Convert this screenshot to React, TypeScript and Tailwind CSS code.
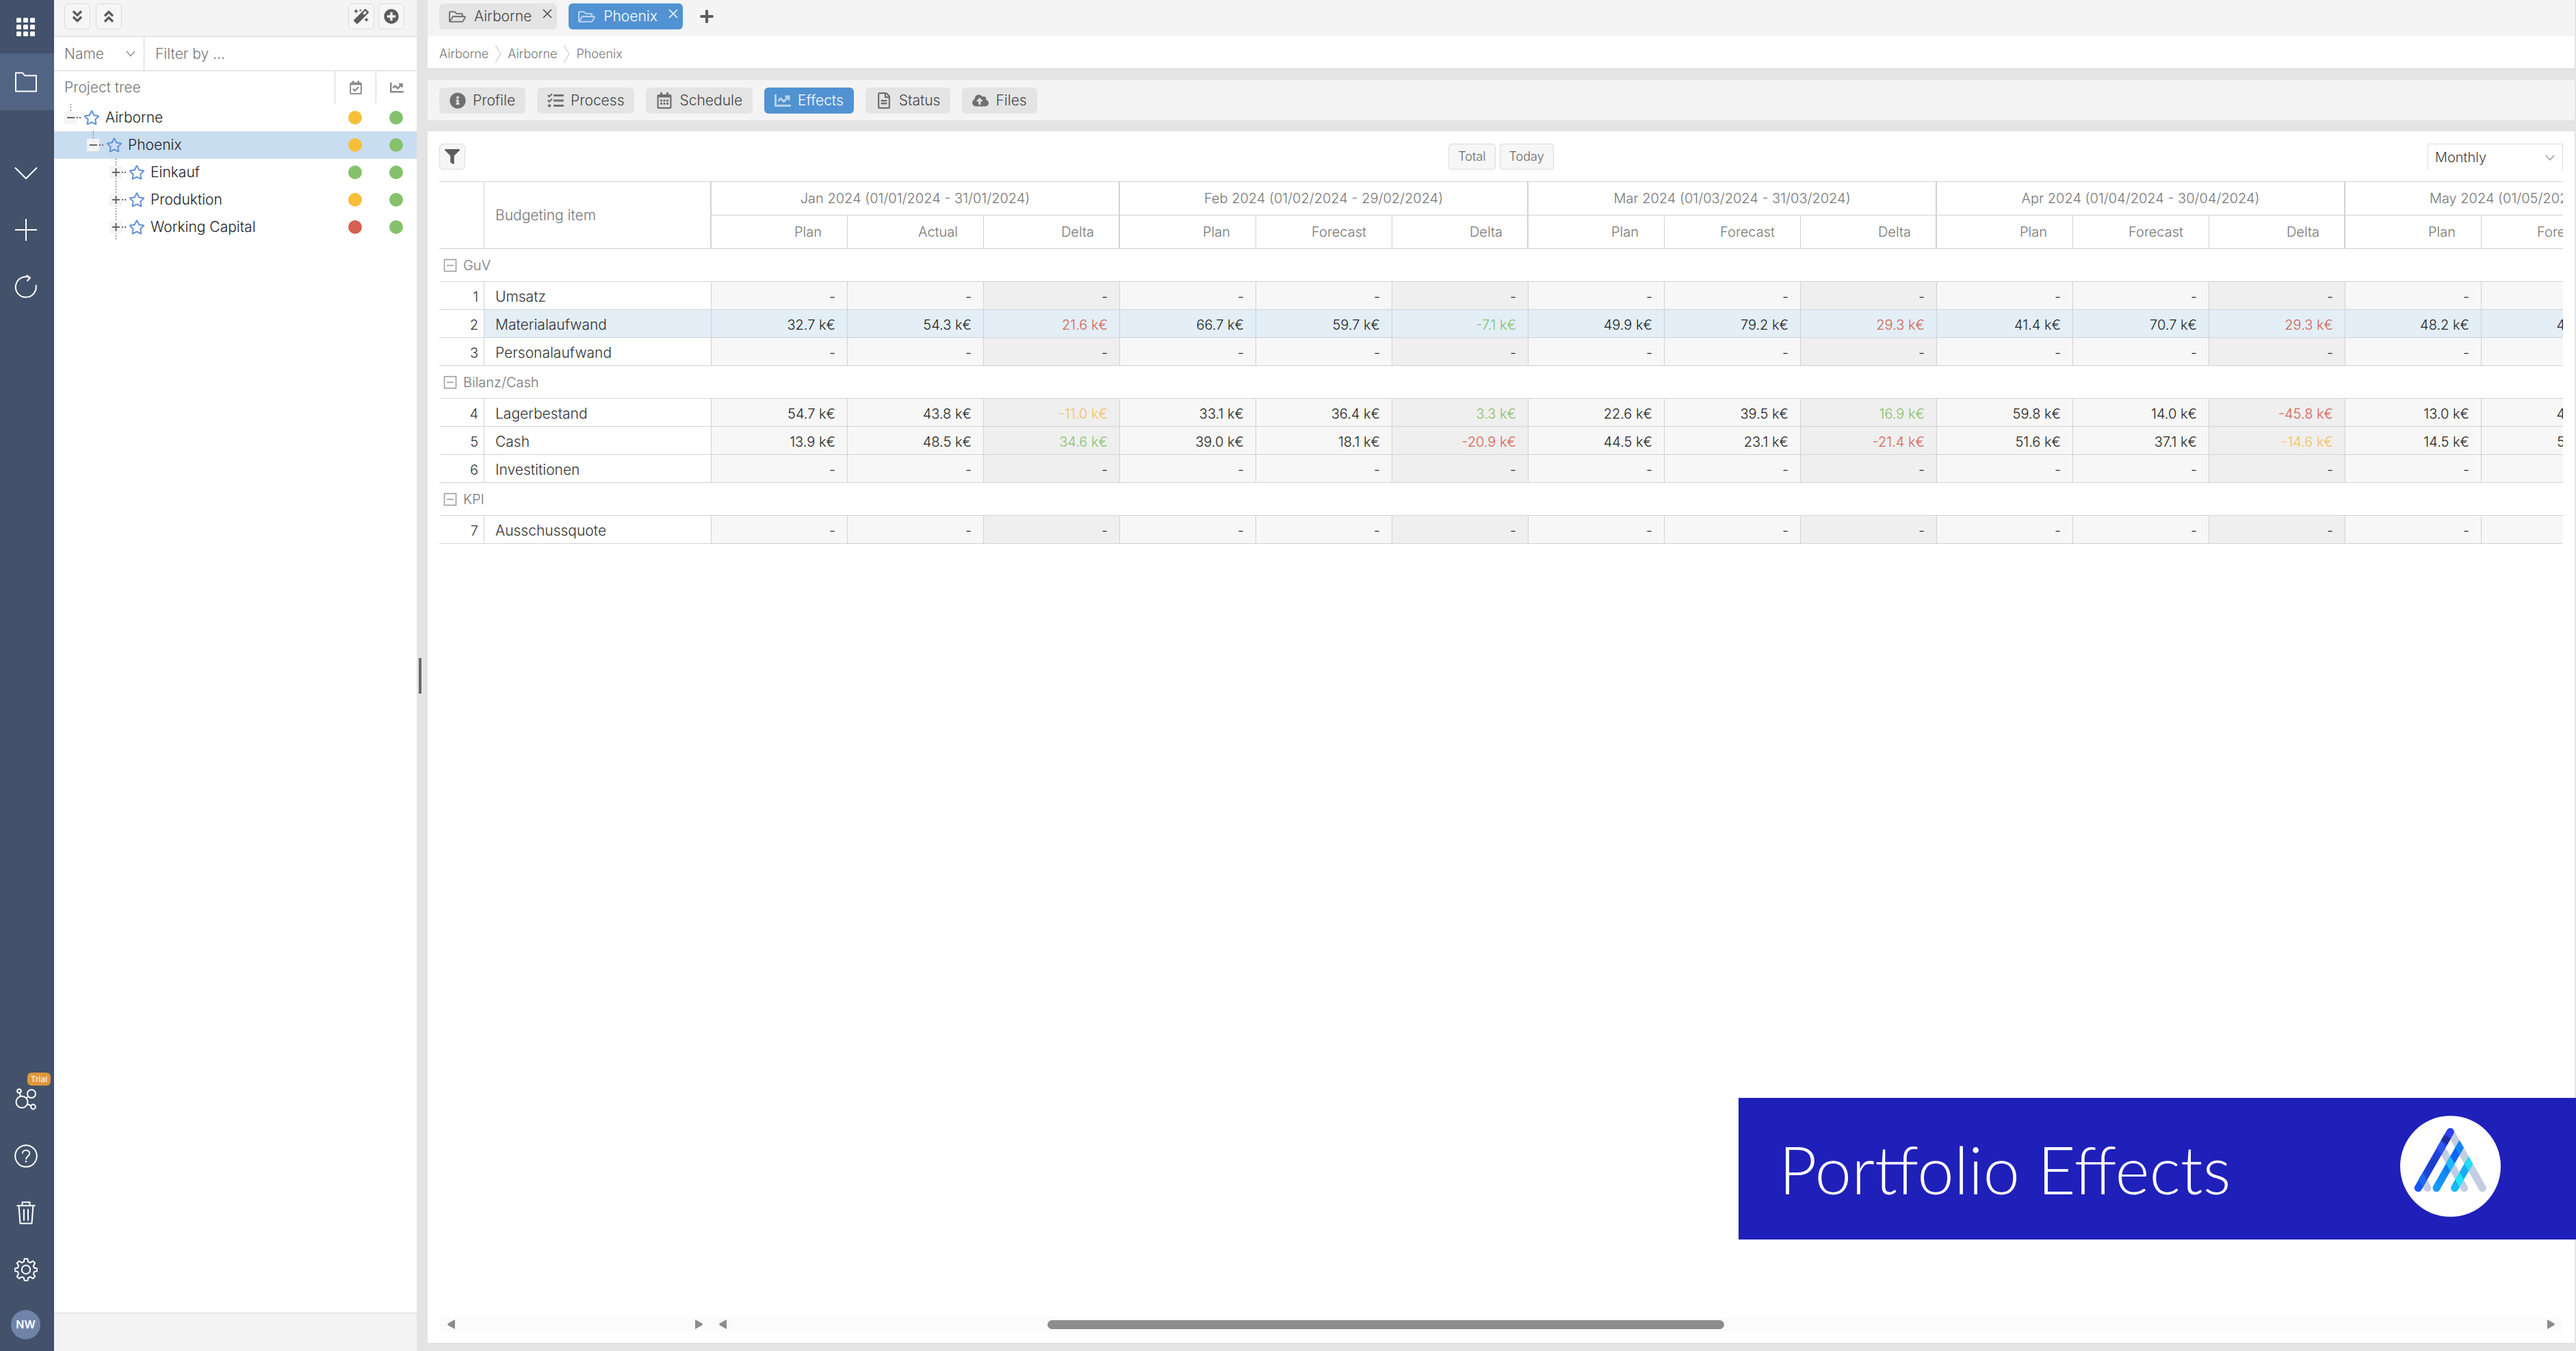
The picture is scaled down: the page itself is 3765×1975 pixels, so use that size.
import type { ReactNode } from 'react'
import clsx from 'clsx'
import {
  FaAngleDoubleDown,
  FaAngleDoubleUp,
  FaChartLine,
  FaCloudUploadAlt,
  FaFilter,
  FaInfoCircle,
  FaMagic,
  FaPlus,
  FaPlusCircle,
  FaRegCalendarAlt,
  FaRegCalendarCheck,
  FaRegFileAlt,
  FaRegFolderOpen,
  FaRegStar,
  FaTasks,
} from 'react-icons/fa'

type Status = 'green' | 'yellow' | 'red'
type Tone = 'good' | 'warn' | 'bad'

interface TreeNode {
  name: string
  level: 0 | 1 | 2
  expanded?: boolean
  selected?: boolean
  schedule: Status
  effects: Status
}

interface BudgetRow {
  id: number
  name: string
  highlighted?: boolean
  // plan, forecast, delta per month; an empty list draws dashes
  values: string[]
  tones?: Tone[]
}

const TREE: TreeNode[] = [
  { name: 'Airborne', level: 0, expanded: true, schedule: 'yellow', effects: 'green' },
  { name: 'Phoenix', level: 1, expanded: true, selected: true, schedule: 'yellow', effects: 'green' },
  { name: 'Einkauf', level: 2, schedule: 'green', effects: 'green' },
  { name: 'Produktion', level: 2, schedule: 'yellow', effects: 'green' },
  { name: 'Working Capital', level: 2, schedule: 'red', effects: 'green' },
]

const MONTHS = [
  { label: 'Jan 2024 (01/01/2024 - 31/01/2024)', second: 'Actual' },
  { label: 'Feb 2024 (01/02/2024 - 29/02/2024)', second: 'Forecast' },
  { label: 'Mar 2024 (01/03/2024 - 31/03/2024)', second: 'Forecast' },
  { label: 'Apr 2024 (01/04/2024 - 30/04/2024)', second: 'Forecast' },
  { label: 'May 2024 (01/05/2024 - 31/05/2024)', second: 'Forecast' },
]

const GROUPS: { name: string; rows: BudgetRow[] }[] = [
  {
    name: 'GuV',
    rows: [
      { id: 1, name: 'Umsatz', values: [] },
      {
        id: 2,
        name: 'Materialaufwand',
        highlighted: true,
        values: ['32.7', '54.3', '21.6', '66.7', '59.7', '-7.1', '49.9', '79.2', '29.3', '41.4', '70.7', '29.3', '48.2', '44.0'],
        tones: ['bad', 'good', 'bad', 'bad'],
      },
      { id: 3, name: 'Personalaufwand', values: [] },
    ],
  },
  {
    name: 'Bilanz/Cash',
    rows: [
      {
        id: 4,
        name: 'Lagerbestand',
        values: ['54.7', '43.8', '-11.0', '33.1', '36.4', '3.3', '22.6', '39.5', '16.9', '59.8', '14.0', '-45.8', '13.0', '44.0'],
        tones: ['warn', 'good', 'good', 'bad'],
      },
      {
        id: 5,
        name: 'Cash',
        values: ['13.9', '48.5', '34.6', '39.0', '18.1', '-20.9', '44.5', '23.1', '-21.4', '51.6', '37.1', '-14.6', '14.5', '54.0'],
        tones: ['good', 'bad', 'bad', 'warn'],
      },
      { id: 6, name: 'Investitionen', values: [] },
    ],
  },
  { name: 'KPI', rows: [{ id: 7, name: 'Ausschussquote', values: [] }] },
]

const VALUE_COLUMNS = MONTHS.length * 3

const STATUS_CLASS: Record<Status, string> = {
  green: 'bg-[#85c26b]',
  yellow: 'bg-[#f6bf3a]',
  red: 'bg-[#d56152]',
}

const TONE_CLASS: Record<Tone, string> = {
  good: 'text-[#85c26b]',
  warn: 'text-[#f6bf5a]',
  bad: 'text-[#d56152]',
}

const INDENT_CLASS = ['pl-[15px]', 'pl-[48px]', 'pl-[81px]']

function Chevron({ className }: { className?: string }) {
  return (
    <svg viewBox="0 0 16 10" fill="none" stroke="currentColor" strokeWidth="1.4" className={className}>
      <path d="M1 1l7 8 7-8" />
    </svg>
  )
}

function RailIcon({ children }: { children: ReactNode }) {
  return (
    <svg viewBox="0 0 34 34" width="34" height="34" fill="none" stroke="white" strokeWidth="2" strokeLinejoin="round">
      {children}
    </svg>
  )
}

function RailButton({ label, active, children }: { label: string; active?: boolean; children: ReactNode }) {
  return (
    <button
      type="button"
      aria-label={label}
      className={clsx('relative flex h-[83px] w-full items-center justify-center pr-1', active && 'bg-[#526484]')}
    >
      {children}
    </button>
  )
}

function Rail() {
  return (
    <nav className="flex w-[79px] shrink-0 flex-col bg-[#43526a]">
      <button type="button" aria-label="Apps" className="flex h-[78px] items-center justify-center pr-1">
        <svg viewBox="0 0 27 27" width="27" height="27" fill="white">
          {[0, 10, 20].map((y) => [0, 10, 20].map((x) => <rect key={`${x}-${y}`} x={x} y={y} width="7" height="7" rx="1.5" />))}
        </svg>
      </button>
      <RailButton label="Projects" active>
        <RailIcon>
          <path d="M2 3.500h10l3 4h17v23H2z" />
        </RailIcon>
      </RailButton>

      <div className="mt-[50px]">
        <RailButton label="Collapse">
          <RailIcon>
            <path d="M1 9l16 16L33 9" />
          </RailIcon>
        </RailButton>
        <RailButton label="Add">
          <RailIcon>
            <path d="M17 1v32M1 17h32" />
          </RailIcon>
        </RailButton>
        <RailButton label="Reload">
          <RailIcon>
            <path d="M31.500 14.500A15 15 0 1 1 22 3.500M17.500 0l5.500 4-4.500 5" />
          </RailIcon>
        </RailButton>
      </div>

      <div className="mt-auto">
        <RailButton label="Integrations">
          <span className="absolute top-[3px] right-[5px] flex h-[19px] w-[34px] items-center justify-center rounded-md bg-[#e0963a] text-[12px] font-normal text-white">
            Trial
          </span>
          <RailIcon>
            <circle cx="11" cy="21" r="8.500" />
            <circle cx="25" cy="9" r="6" />
            <circle cx="7" cy="5" r="2.800" />
            <circle cx="27.500" cy="28" r="3.400" />
            <path d="M8 8l1 5M20.500 13l-4 2.500M19 24l5.500 2.500" />
          </RailIcon>
        </RailButton>
        <RailButton label="Help">
          <RailIcon>
            <circle cx="17" cy="17" r="15.800" />
            <path d="M11.800 13.500c0-3 2.200-5 5.200-5s5.200 2 5.200 4.700c0 4-5.200 4.300-5.200 8.800" />
            <circle cx="17" cy="25" r="1" fill="white" strokeWidth="1" />
          </RailIcon>
        </RailButton>
        <RailButton label="Trash">
          <RailIcon>
            <path d="M3.500 6.500h27M6.500 6.500l2 26h17l2-26M11.500 6V1.500h11V6M14 11.500v17M20 11.500v17" />
          </RailIcon>
        </RailButton>
        <RailButton label="Settings">
          <RailIcon>
            <circle cx="17" cy="17" r="6.200" />
            <path d="M14.800 1.200h4.400l1 4.400 3 1.300 3.900-2.400 3.100 3.100-2.400 3.900 1.300 3 4.300 1v3.500l-4.300 1.100-1.300 3 2.400 3.900-3.100 3.100-3.900-2.400-3 1.300-1 4.300h-4.400l-1-4.300-3-1.300-3.900 2.400-3.100-3.100 2.400-3.900-1.300-3-4.300-1.100v-3.500l4.300-1 1.300-3-2.400-3.900 3.100-3.100 3.900 2.400 3-1.300z" />
          </RailIcon>
        </RailButton>
        <button type="button" className="flex h-[78px] w-full items-center justify-center pr-1">
          <span className="flex size-[43px] items-center justify-center rounded-full bg-[#7084aa] text-[16px] font-semibold text-white">
            NW
          </span>
        </button>
      </div>
    </nav>
  )
}

function ToolButton({ label, children }: { label: string; children: ReactNode }) {
  return (
    <button
      type="button"
      aria-label={label}
      className="flex size-[38px] items-center justify-center rounded-md border border-[#dcdcdc] bg-[#f6f6f6] text-[22px] text-[#5c5c5c]"
    >
      {children}
    </button>
  )
}

function Dot({ status }: { status: Status }) {
  return (
    <span className="flex w-[60px] justify-center">
      <span className={clsx('size-5 rounded-full', STATUS_CLASS[status])} />
    </span>
  )
}

function TreeRow({ node }: { node: TreeNode }) {
  return (
    <li className={clsx('flex h-10 items-center text-[#222]', INDENT_CLASS[node.level], node.selected && 'bg-[#c9ddf0]')}>
      <button
        type="button"
        aria-label={`${node.expanded ? 'Collapse' : 'Expand'} ${node.name}`}
        className="flex h-10 w-7 items-center"
      >
        <svg viewBox="0 0 28 40" width="28" height="40" stroke="#666">
          <path d={node.expanded ? 'M9.500 0v12' : 'M9.500 0v40'} strokeDasharray="2 2" />
          <rect x="0" y="11" width="18" height="18" fill="#f4f4f4" stroke="none" />
          <path d={node.expanded ? 'M4 20h11' : 'M4 20h11M9.500 14v12'} strokeWidth="2" />
          <path d="M18 20h6" strokeDasharray="2 2" strokeWidth="2" />
        </svg>
      </button>
      <FaRegStar className="text-[24px] text-[#6393d6]" />
      <span className="ml-2 flex-1">{node.name}</span>
      <Dot status={node.schedule} />
      <Dot status={node.effects} />
    </li>
  )
}

function Sidebar() {
  return (
    <aside className="flex w-[530px] shrink-0 flex-col bg-white text-[21px]">
      <div className="flex h-[54px] items-start justify-between border-b border-[#d6d6d6] bg-[#f4f4f4] pt-[5px] pr-[18px] pl-[15px]">
        <div className="flex gap-2">
          <ToolButton label="Expand all">
            <FaAngleDoubleDown />
          </ToolButton>
          <ToolButton label="Collapse all">
            <FaAngleDoubleUp />
          </ToolButton>
        </div>
        <div className="flex gap-[6px]">
          <ToolButton label="Assistant">
            <FaMagic />
          </ToolButton>
          <ToolButton label="Add project">
            <FaPlusCircle />
          </ToolButton>
        </div>
      </div>

      <div className="flex h-[50px] border-b border-[#d6d6d6] text-[#777]">
        <div className="relative w-[132px] border-r border-[#d6d6d6]">
          <select aria-label="Filter field" className="h-full w-full appearance-none pl-[15px] font-light outline-none">
            <option>Name</option>
          </select>
          <Chevron className="pointer-events-none absolute top-5 right-3 w-[14px]" />
        </div>
        <input
          aria-label="Filter by"
          placeholder="Filter by ..."
          className="min-w-0 flex-1 pl-4 font-light outline-none placeholder:text-[#777]"
        />
      </div>

      <div className="flex h-12 items-stretch text-[#777]">
        <span className="flex flex-1 items-center pl-[15px]">Project tree</span>
        <span className="flex w-[60px] items-center justify-center border-l border-[#d6d6d6]">
          <FaRegCalendarCheck className="text-[20px] text-[#888]" />
        </span>
        <span className="flex w-[60px] items-center justify-center border-l border-[#d6d6d6]">
          <FaChartLine className="text-[20px] text-[#888]" />
        </span>
      </div>

      <ul className="flex-1">
        {TREE.map((node) => (
          <TreeRow key={node.name} node={node} />
        ))}
      </ul>

      <div className="h-14 border-t border-[#cfd4d3] bg-[#f4f4f4]" />
    </aside>
  )
}

function ProjectTab({ name, active }: { name: string; active?: boolean }) {
  return (
    <div className={clsx('flex h-[38px] items-center rounded-md pr-[7px] pl-[14px]', active ? 'bg-[#5192d2] text-white' : 'bg-[#e4e4e4] text-[#444]')}>
      <button type="button" className="flex items-center gap-3">
        <FaRegFolderOpen className={clsx('text-[25px]', active ? 'text-white/60' : 'text-[#777]')} />
        {name}
      </button>
      <button type="button" aria-label={`Close ${name}`} className="mb-2 ml-4">
        <svg viewBox="0 0 14 14" width="14" height="14" stroke="currentColor" strokeWidth="1.500">
          <path d="M1 1l12 12M13 1L1 13" />
        </svg>
      </button>
    </div>
  )
}

function ViewTab({ label, icon, active }: { label: string; icon: ReactNode; active?: boolean }) {
  return (
    <button
      type="button"
      className={clsx('flex h-[38px] items-center gap-[10px] rounded-md px-[15px]', active ? 'bg-[#5192d2] text-white' : 'bg-[#e4e4e4] text-[#444]')}
    >
      <span className={clsx('text-[24px]', active ? 'text-white/60' : 'text-[#707070]')}>{icon}</span>
      {label}
    </button>
  )
}

function CrumbSeparator() {
  return (
    <svg viewBox="0 0 10 26" width="10" height="26" fill="none" stroke="#d8d8d8" strokeWidth="1.500">
      <path d="M1 0l8 13-8 13" />
    </svg>
  )
}

function ValueCells({ row }: { row: BudgetRow }) {
  return (
    <>
      {Array.from({ length: VALUE_COLUMNS }, (_, i) => {
        const value = row.values[i]
        const isDelta = i % 3 === 2
        const tone = isDelta ? row.tones?.[Math.floor(i / 3)] : undefined
        return (
          <td
            key={i}
            className={clsx(
              'border-r border-b border-[#d2d2d2] pt-[3px] pr-[17px] text-right',
              row.highlighted ? 'bg-[#e3eef7]' : isDelta ? 'bg-[#efefef]' : 'bg-[#f7f7f7]',
              tone ? TONE_CLASS[tone] : 'text-[#222]',
            )}
          >
            {value ? `${value} k€` : '-'}
          </td>
        )
      })}
    </>
  )
}

function BudgetTable() {
  return (
    <table className="w-[3383px] table-fixed border-separate border-spacing-0 whitespace-nowrap">
      <colgroup>
        <col className="w-[66px]" />
        <col className="w-[332px]" />
        {Array.from({ length: VALUE_COLUMNS }, (_, i) => (
          <col key={i} className="w-[199px]" />
        ))}
      </colgroup>
      <thead className="text-[#777]">
        <tr className="h-[50px]">
          <th rowSpan={2} className="border-t border-r border-b border-[#d2d2d2]" />
          <th rowSpan={2} className="border-t border-r-2 border-b border-[#d2d2d2] pl-4 text-left text-[21px] font-light">
            Budgeting item
          </th>
          {MONTHS.map((m) => (
            <th key={m.label} colSpan={3} className="border-t border-r-2 border-b border-[#d2d2d2] font-light">
              {m.label}
            </th>
          ))}
        </tr>
        <tr className="h-[49px]">
          {MONTHS.flatMap((m) =>
            ['Plan', m.second, 'Delta'].map((title, i) => (
              <th
                key={`${m.label}-${title}`}
                className={clsx('border-b border-[#d2d2d2] text-right font-light', i === 2 ? 'border-r-2 pr-9' : 'border-r pr-[37px]')}
              >
                {title}
              </th>
            )),
          )}
        </tr>
      </thead>
      {GROUPS.map((group) => (
        <tbody key={group.name}>
          <tr className="h-12 text-[#777]">
            <td colSpan={VALUE_COLUMNS + 2} className="border-b border-[#d2d2d2] pl-[6px]">
              <button type="button" className="flex items-center gap-[9px]">
                <svg viewBox="0 0 20 20" width="20" height="20" fill="none" stroke="#999" strokeWidth="1.500">
                  <path d="M1.500 1.500h17v17h-17zM5 10h10" />
                </svg>
                {group.name}
              </button>
            </td>
          </tr>
          {group.rows.map((row) => (
            <tr key={row.id} className="h-[41px] text-[#333]">
              <td className="border-r border-b border-[#d2d2d2] pt-[3px] pr-2 text-right">{row.id}</td>
              <td
                className={clsx(
                  'border-r border-b border-[#d2d2d2] pt-[3px] pl-4 text-[21px]',
                  row.highlighted && 'bg-[#e3eef7]',
                )}
              >
                {row.name}
              </td>
              <ValueCells row={row} />
            </tr>
          ))}
        </tbody>
      ))}
    </table>
  )
}

function Arrow({ side }: { side: 'left' | 'right' }) {
  return (
    <svg viewBox="0 0 11 14" width="11" height="14" fill="#8c8c8c" className="shrink-0">
      <path d={side === 'left' ? 'M11 0v14L1 8.500Q-.5 7 1 5.500z' : 'M0 0v14l10-5.500q1.500-1.500 0-3z'} />
    </svg>
  )
}

function Scrollbars() {
  return (
    <div className="flex h-5 bg-[#fbfbfb]">
      <div className="flex w-[397px] shrink-0 items-center justify-between px-3">
        <Arrow side="left" />
        <Arrow side="right" />
      </div>
      <div className="flex flex-1 items-center px-3">
        <Arrow side="left" />
        <span className="flex-[469]" />
        <span className="h-[13px] flex-[988] rounded-full bg-[#8c8c8c]" />
        <span className="flex-[1203]" />
        <Arrow side="right" />
      </div>
    </div>
  )
}

function Logo() {
  return (
    <svg viewBox="54 30 441 443" width="147" height="148" strokeWidth="33" strokeLinecap="round" className="mb-2">
      <defs>
        <linearGradient id="bar-main" gradientUnits="userSpaceOnUse" x1="274" y1="100" x2="133" y2="347">
          <stop offset="0" stopColor="#2d3df0" />
          <stop offset="0.3" stopColor="#2444e0" />
          <stop offset="0.6" stopColor="#1c3cc8" />
          <stop offset="1" stopColor="#1458fa" />
        </linearGradient>
        <linearGradient id="bar-mid" gradientUnits="userSpaceOnUse" x1="314" y1="170" x2="213" y2="347">
          <stop offset="0" stopColor="#0a60f2" />
          <stop offset="0.4" stopColor="#0c6cf6" />
          <stop offset="0.6" stopColor="#1187f2" />
          <stop offset="1" stopColor="#149afc" />
        </linearGradient>
      </defs>
      <ellipse cx="274.500" cy="251.500" rx="220.500" ry="221.500" fill="white" />
      <g stroke="#c3cde2">
        <path d="M274 100l141 247M234 170l101 177M153 311l21 36" />
      </g>
      <path d="M274 100L133 347" stroke="url(#bar-main)" />
      <path d="M262 121l-16 28" stroke="#1d2ca4" strokeLinecap="butt" />
      <path d="M314 170L213 347" stroke="url(#bar-mid)" strokeLinecap="butt" />
      <path d="M354 240l-61 107" stroke="#1cacf0" strokeLinecap="butt" />
      <circle cx="213" cy="347" r="16.500" fill="#149afc" />
      <circle cx="293" cy="347" r="16.500" fill="#16bafa" />
      <path d="M234 137l19 33-19 33-19-33z" fill="#2b56f2" />
      <path d="M153 278l19 33-19 33-19-33z" fill="#2068f0" />
      <path d="M314 137l19 33-19 33-19-33z" fill="#0f84fa" />
      <path d="M274 207l19 33-19 33-19-33z" fill="#18bcfc" />
      <path d="M354 207l19 33-19 33-19-33z" fill="#20dcfa" />
      <path d="M314 277l19 33-19 33-19-33z" fill="#20e6fc" />
    </svg>
  )
}

export default function App() {
  return (
    <div className="relative flex h-screen overflow-hidden bg-[#e4e4e4] font-['Inter','Liberation_Sans',sans-serif] text-[20px] leading-6 font-light">
      <Rail />
      <Sidebar />
      <div className="flex w-4 shrink-0 items-center pl-[3px]">
        <span className="h-[52px] w-1 bg-[#6a6a6a]" />
      </div>

      <main className="flex min-w-0 flex-1 flex-col pr-[2px] pb-3">
        <div className="flex h-[53px] items-start bg-[#f4f4f4] px-[17px] pt-[5px] text-[21px]">
          <div className="flex gap-[17px]">
            <ProjectTab name="Airborne" />
            <ProjectTab name="Phoenix" active />
          </div>
          <button type="button" aria-label="Open tab" className="ml-6 flex h-[38px] items-center text-[22px] text-[#5c5c5c]">
            <FaPlus />
          </button>
        </div>
        <nav className="flex h-12 items-center gap-[9px] border-b border-[#d6d6d6] bg-white px-[17px] pt-1 text-[18px] text-[#777]">
          <a href="#portfolio">Airborne</a>
          <CrumbSeparator />
          <a href="#airborne">Airborne</a>
          <CrumbSeparator />
          <a href="#phoenix">Phoenix</a>
        </nav>

        <div className="mt-4 flex h-[59px] items-center gap-[17px] bg-[#f4f4f4] px-[17px] text-[21px]">
          <ViewTab label="Profile" icon={<FaInfoCircle />} />
          <ViewTab label="Process" icon={<FaTasks />} />
          <ViewTab label="Schedule" icon={<FaRegCalendarAlt />} />
          <ViewTab label="Effects" icon={<FaChartLine />} active />
          <ViewTab label="Status" icon={<FaRegFileAlt />} />
          <ViewTab label="Files" icon={<FaCloudUploadAlt />} />
        </div>

        <section className="mt-4 flex min-h-0 flex-1 flex-col bg-white px-[17px] pb-[17px]">
          <div className="grid h-[73px] grid-cols-3 items-start pt-[18px]">
            <ToolButton label="Filter">
              <FaFilter />
            </ToolButton>
            <div className="flex justify-center gap-[6px] text-[18px] text-[#666]">
              <button type="button" className="h-[38px] rounded border border-[#dcdcdc] bg-[#f6f6f6] px-[13px]">
                Total
              </button>
              <button type="button" className="h-[38px] rounded border border-[#dcdcdc] bg-[#f6f6f6] px-[13px]">
                Today
              </button>
            </div>
            <div className="relative w-[198px] justify-self-end text-[#444]">
              <select
                aria-label="Period"
                className="h-[38px] w-full appearance-none border border-b-0 border-[#dcdcdc] bg-white pl-[10px] font-light outline-none"
              >
                <option>Monthly</option>
              </select>
              <Chevron className="pointer-events-none absolute top-4 right-3 w-[14px] text-[#888]" />
            </div>
          </div>
          <div className="min-h-0 flex-1 overflow-hidden">
            <BudgetTable />
          </div>
          <Scrollbars />
        </section>
      </main>

      <div className="absolute right-0 bottom-[163px] flex h-[207px] w-[1224px] items-center justify-between bg-[#1f1fba] pr-[110px] pl-[59px]">
        <h1 className="font-['Lato',sans-serif] text-[96px] leading-none font-light text-white">Portfolio Effects</h1>
        <Logo />
      </div>
    </div>
  )
}
